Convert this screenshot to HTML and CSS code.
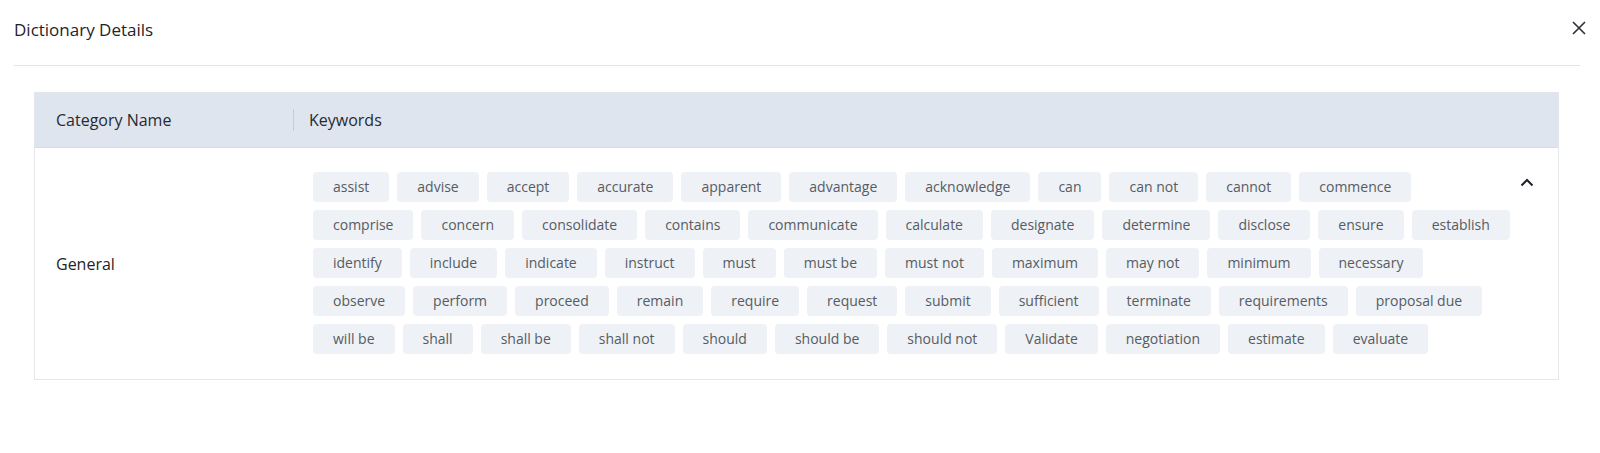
FILE: index.html
```html
<!DOCTYPE html>
<html lang="en">
<head>
    <meta charset="UTF-8">
    <meta name="viewport" content="width=device-width, initial-scale=1.0">
    <title>Dictionary Details</title>
    <link rel="stylesheet" href="styles.css">
</head>
<body>
    <div class="modal">
        <div class="modal-header">
            <h2 class="modal-title">Dictionary Details</h2>
            <button class="close-btn" aria-label="Close">
                <svg width="14" height="14" viewBox="0 0 14 14"><path d="M1 1L13 13M13 1L1 13" stroke="#2b2f36" stroke-width="1.6" fill="none"/></svg>
            </button>
        </div>

        <div class="modal-body">
            <div class="dict-table">
                <div class="table-head">
                    <div class="col-name">Category Name</div>
                    <div class="col-keywords">Keywords</div>
                </div>
                <div class="table-row">
                    <div class="cell-name">General</div>
                    <div class="cell-keywords" id="keywords"></div>
                    <div class="cell-toggle">
                        <svg width="14" height="9" viewBox="0 0 14 9"><path d="M1.5 7.5L7 2L12.5 7.5" stroke="#1f2329" stroke-width="2" fill="none"/></svg>
                    </div>
                </div>
            </div>
        </div>
    </div>

    <script>
        const words = ["assist", "advise", "accept", "accurate", "apparent", "advantage", "acknowledge", "can", "can not", "cannot", "commence",
            "comprise", "concern", "consolidate", "contains", "communicate", "calculate", "designate", "determine", "disclose", "ensure", "establish",
            "identify", "include", "indicate", "instruct", "must", "must be", "must not", "maximum", "may not", "minimum", "necessary",
            "observe", "perform", "proceed", "remain", "require", "request", "submit", "sufficient", "terminate", "requirements", "proposal due",
            "will be", "shall", "shall be", "shall not", "should", "should be", "should not", "Validate", "negotiation", "estimate", "evaluate"];

        const box = document.getElementById("keywords");
        words.forEach(function(w) {
            const tag = document.createElement("span");
            tag.className = "tag";
            tag.textContent = w;
            box.appendChild(tag);
        });
    </script>
</body>
</html>
```

FILE: styles.css
```css
body {
    margin: 0;
    font-family: "Open Sans", "Liberation Sans", sans-serif;
    background-color: #ffffff;
    color: #2b2f36;
}
.modal {
    padding: 0 20px 0 14px;
}
.modal-header {
    height: 65px;
    display: flex;
    align-items: center;
    justify-content: space-between;
    border-bottom: 1px solid #e2e4e8;
}
.modal-title {
    margin: 0 0 6px 0;
    font-size: 17px;
    font-weight: 400;
    color: #1f2329;
}
.close-btn {
    border: none;
    background: none;
    padding: 0;
    margin: 0 -6px 10px 0;
    cursor: pointer;
    display: flex;
}
.modal-body {
    padding: 26px 21px 0 20px;
}
.dict-table {
    border: 1px solid #e3e6ea;
}
.table-head {
    display: flex;
    align-items: center;
    height: 54px;
    background-color: #dfe5ee;
    border-bottom: 1px solid #d6dce5;
    font-size: 16px;
    color: #262a30;
}
.col-name {
    width: 259px;
    padding-left: 21px;
    box-sizing: border-box;
    border-right: 1px solid #c5ccd6;
    line-height: 22px;
}
.col-keywords {
    padding-left: 15px;
}
.table-row {
    display: flex;
    align-items: center;
}
.cell-name {
    width: 278px;
    flex-shrink: 0;
    padding-left: 21px;
    box-sizing: border-box;
    font-size: 16px;
    color: #1f2329;
}
.cell-keywords {
    flex: 1;
    display: flex;
    flex-wrap: wrap;
    gap: 8px;
    padding: 24px 0 25px 0;
}
.tag {
    display: inline-block;
    height: 30px;
    line-height: 30px;
    padding: 0 20px;
    border-radius: 4px;
    background-color: #eef1f5;
    color: #565c64;
    font-size: 14px;
}
.cell-toggle {
    width: 46px;
    flex-shrink: 0;
    align-self: flex-start;
    padding: 22px 0 0 8px;
    box-sizing: border-box;
}
```
